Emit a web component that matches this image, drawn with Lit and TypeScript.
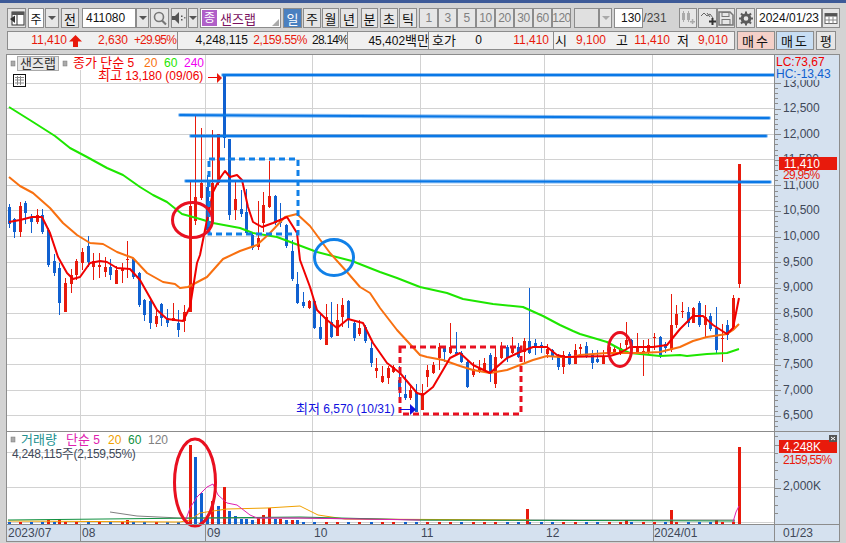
import { LitElement, html, css, svg } from "lit";
import { customElement } from "lit/decorators.js";

// page coordinates are used throughout the chart: the svg viewBox starts at the panel corner
type Candle = [number, number, number, number, number, "r" | "b"];

const CANDLES: Candle[] = [
    [9, 204, 207, 224, 228, "b"], [14, 218, 219, 232, 238, "b"], [20, 202, 206, 232, 237, "r"],
    [25, 201, 203, 213, 224, "b"], [31, 214, 217, 222, 233, "b"], [37, 209, 215, 222, 224, "r"],
    [42, 209, 215, 232, 234, "b"], [48, 228, 230, 265, 267, "b"], [54, 254, 261, 273, 276, "b"],
    [59, 263, 268, 303, 315, "b"], [65, 278, 283, 312, 312, "r"], [71, 269, 275, 284, 293, "r"],
    [76, 259, 261, 275, 280, "r"], [82, 248, 252, 263, 270, "r"], [88, 236, 246, 262, 267, "b"],
    [93, 253, 261, 267, 280, "r"], [99, 253, 265, 267, 278, "r"], [105, 257, 267, 272, 277, "r"],
    [110, 259, 267, 275, 280, "b"], [116, 266, 270, 284, 284, "r"], [122, 263, 268, 271, 283, "r"],
    [127, 241, 259, 260, 278, "r"], [133, 258, 259, 277, 279, "b"], [139, 272, 273, 305, 307, "b"],
    [144, 299, 300, 315, 321, "b"], [150, 300, 301, 323, 329, "b"], [156, 309, 316, 324, 327, "r"],
    [161, 303, 304, 318, 326, "b"], [167, 309, 318, 323, 327, "b"], [173, 303, 318, 321, 321, "r"],
    [178, 310, 323, 330, 337, "b"], [184, 305, 312, 321, 332, "r"], [190, 182, 206, 312, 312, "r"],
    [195, 116, 197, 221, 225, "r"], [201, 128, 183, 198, 200, "r"], [207, 175, 187, 230, 232, "b"],
    [212, 130, 183, 222, 224, "r"], [218, 134, 134, 183, 185, "r"], [224, 75, 75, 138, 148, "b"],
    [229, 139, 139, 215, 220, "b"], [235, 182, 199, 210, 220, "r"], [241, 190, 209, 214, 217, "b"],
    [246, 189, 212, 233, 235, "b"], [252, 233, 235, 248, 250, "b"], [258, 201, 238, 247, 250, "r"],
    [263, 192, 205, 223, 232, "r"], [269, 161, 196, 207, 208, "r"], [275, 195, 196, 223, 225, "b"],
    [280, 203, 219, 223, 227, "b"], [286, 224, 225, 246, 248, "b"], [292, 240, 251, 279, 281, "b"],
    [297, 272, 284, 303, 304, "b"], [303, 292, 302, 306, 308, "b"], [309, 300, 301, 308, 309, "r"],
    [314, 300, 301, 328, 329, "b"], [320, 313, 327, 339, 340, "b"], [326, 304, 317, 345, 345, "r"],
    [331, 302, 322, 337, 338, "b"], [337, 304, 320, 336, 336, "r"], [342, 298, 305, 317, 327, "r"],
    [348, 300, 301, 320, 328, "b"], [354, 320, 323, 338, 341, "b"], [359, 320, 328, 334, 336, "r"],
    [365, 325, 327, 341, 343, "b"], [371, 342, 348, 363, 367, "b"], [376, 358, 368, 371, 378, "r"],
    [382, 366, 376, 382, 383, "r"], [388, 366, 368, 378, 384, "r"], [393, 365, 367, 372, 373, "r"],
    [399, 366, 380, 390, 403, "b"], [405, 375, 394, 398, 400, "b"], [410, 385, 390, 398, 400, "r"],
    [416, 384, 392, 412, 412, "b"], [422, 384, 393, 410, 410, "r"], [427, 365, 370, 377, 387, "r"],
    [433, 362, 365, 373, 374, "r"], [439, 343, 347, 358, 370, "r"], [444, 346, 348, 352, 362, "b"],
    [450, 323, 347, 353, 354, "r"], [456, 332, 352, 354, 354, "b"], [461, 351, 353, 362, 363, "b"],
    [467, 361, 362, 387, 388, "b"], [473, 362, 369, 375, 377, "r"], [479, 360, 368, 372, 373, "r"],
    [484, 358, 363, 372, 373, "r"], [490, 353, 355, 372, 382, "b"], [495, 347, 357, 384, 388, "r"],
    [501, 342, 347, 358, 359, "r"], [507, 345, 347, 358, 362, "b"], [512, 337, 347, 353, 354, "r"],
    [518, 343, 347, 357, 358, "b"], [524, 338, 341, 352, 362, "r"], [529, 288, 341, 353, 354, "b"],
    [535, 339, 343, 347, 355, "b"], [541, 342, 345, 347, 353, "b"], [547, 344, 349, 354, 358, "r"],
    [552, 349, 350, 357, 360, "b"], [558, 354, 355, 367, 370, "b"], [563, 351, 355, 367, 374, "r"],
    [569, 352, 354, 364, 365, "b"], [575, 344, 350, 364, 364, "r"], [580, 344, 347, 349, 357, "r"],
    [586, 342, 346, 357, 358, "b"], [592, 350, 354, 363, 369, "b"], [597, 350, 359, 362, 363, "b"],
    [603, 350, 356, 364, 364, "r"], [609, 345, 347, 354, 356, "r"], [614, 345, 349, 353, 355, "r"],
    [620, 343, 348, 352, 355, "r"], [626, 322, 340, 345, 350, "r"], [631, 339, 340, 350, 352, "b"],
    [637, 333, 348, 352, 353, "r"], [643, 340, 351, 353, 376, "r"], [648, 339, 345, 353, 355, "r"],
    [654, 333, 337, 338, 350, "r"], [660, 336, 337, 355, 358, "b"], [665, 342, 344, 348, 353, "b"],
    [671, 294, 325, 350, 352, "r"], [676, 305, 314, 325, 328, "r"], [682, 302, 311, 312, 318, "r"],
    [688, 307, 312, 323, 327, "b"], [693, 307, 308, 323, 323, "r"], [699, 301, 303, 325, 327, "b"],
    [705, 305, 317, 325, 337, "r"], [710, 313, 316, 329, 331, "b"], [716, 307, 328, 350, 353, "b"],
    [722, 324, 338, 339, 362, "r"], [727, 320, 325, 335, 340, "b"], [733, 295, 298, 328, 330, "r"],
    [739, 164, 164, 284, 288, "r"],
];

const GREEN = "9,107 33,122 55,136 70,148 87,157 107,168 123,175 140,187 153,195 167,202 182,214 200,219 213,223 240,228 253,233 277,237 293,243 317,252 352,261 380,272 397,278 420,287 447,293 463,299 493,304 523,307 543,316 560,325 573,331 580,334 597,339 607,342 620,349 630,353 640,354 660,356 680,355 687,356 707,354 727,353 739,349";
const ORANGE = "9,177 20,186 33,193 50,208 63,223 77,235 90,243 103,244 117,252 133,258 147,273 163,282 175,284 180,288 188,287 207,277 223,259 240,251 257,245 270,233 285,217 297,214 310,226 330,253 347,272 360,287 370,293 380,308 397,330 420,355 427,357 443,360 460,366 473,370 490,373 507,370 520,365 533,360 547,356 560,357 573,357 580,355 607,353 640,353 660,352 680,347 693,341 707,337 727,334 733,330 739,324";
const RED = "9,222 20,220 32,217 42,217 50,233 58,257 67,273 73,279 80,277 90,263 100,261 107,262 117,268 130,269 140,280 157,310 167,319 183,321 190,307 197,263 200,255 207,220 213,192 220,178 225,171 230,177 237,175 242,180 248,207 253,222 262,227 273,223 287,217 297,233 300,260 310,287 317,310 327,320 337,328 348,319 363,323 373,343 387,363 400,373 417,393 423,395 433,387 443,370 450,358 460,353 473,365 490,373 507,358 520,352 533,347 547,347 557,355 565,357 610,356 620,353 630,347 653,347 667,345 680,329 693,316 703,316 713,325 727,334 733,328 739,298";

const VOL_MAGENTA = "185,522 190,508 197,497 207,487 213,484 218,495 227,503 237,505 250,515 257,518 300,518 420,520";
const VOL_ORANGE = "8,521 180,522 190,520 200,513 213,511 227,509 267,508 300,506 318,515 345,519 530,520";
const VOL_GREEN = "8,520 200,518 300,517 420,520 735,521";
const VOL_GRAY = "110,512 137,516 180,518 300,518 430,520 735,520";

// tall volume bars around the September spike, the rest stays near the baseline
const VOL_BARS: [number, number, "r" | "b"][] = [
    [190, 445, "r"], [195, 457, "b"], [201, 493, "b"], [207, 518, "b"], [212, 501, "r"], [218, 506, "b"],
    [224, 487, "r"], [229, 511, "b"], [235, 516, "b"], [241, 519, "b"], [246, 519, "b"], [252, 520, "b"],
    [258, 518, "r"], [263, 515, "r"], [269, 508, "r"], [275, 519, "b"], [280, 519, "r"], [286, 520, "b"],
    [292, 520, "r"], [297, 520, "b"], [48, 520, "r"], [59, 519, "r"], [127, 520, "r"], [527, 509, "r"],
    [671, 510, "r"], [739, 447, "r"], [626, 520, "r"], [716, 520, "r"],
];

const PRICE_LABELS = ["13,000", "12,500", "12,000", "11,500", "11,000", "10,500", "10,000", "9,500", "9,000", "8,500", "8,000", "7,500", "7,000", "6,500"];
const H_GRID = [83, 108, 134, 159, 185, 210, 236, 262, 287, 313, 338, 364, 390, 415];
const V_GRID = [80, 205, 312, 420, 544, 652];
const DATES: [number, string][] = [[8, "2023/07"], [82, "08"], [207, "09"], [314, "10"], [421, "11"], [546, "12"], [654, "2024/01"]];

const HANGUL = /([가-힣]+)/;

const range = (from: number, to: number, step: number) => {
    const out: number[] = [];
    for (let v = from; v <= to; v += step) out.push(v);
    return out;
};

// hangul in the CJK font runs narrower than the reference, so those runs get a size up
const svgRuns = (t: string) =>
    t.split(HANGUL).filter(Boolean).map((p) => (HANGUL.test(p) ? svg`<tspan class="h">${p}</tspan>` : p));
const htmlRuns = (t: string) =>
    t.split(HANGUL).filter(Boolean).map((p) => (HANGUL.test(p) ? html`<span class="h">${p}</span>` : html`<span>${p}</span>`));

const ic = {
    panel: svg`<rect x="4" y="2" width="12" height="13" fill="#fff" stroke="#333"/><rect x="4" y="2" width="12" height="3" fill="#555"/><line x1="9" y1="5" x2="9" y2="15" stroke="#333"/><path d="M7 5.500 2 9l5 4z" fill="#333"/>`,
    search: svg`<circle cx="8" cy="7" r="4.500" fill="none" stroke="#777" stroke-width="1.600"/><line x1="11" y1="10.500" x2="15" y2="14.500" stroke="#777" stroke-width="2.200"/>`,
    speaker: svg`<path d="M2 6h3l4-4v12L5 10H2z" fill="#555"/><rect x="11" y="5.500" width="1.500" height="1.500" fill="#555"/><rect x="11" y="9" width="1.500" height="1.500" fill="#555"/><rect x="14" y="7" width="1.500" height="1.500" fill="#777"/>`,
    candles: svg`<g fill="#aaa"><rect x="3" y="3" width="3" height="7"/><rect x="8" y="3" width="3" height="7"/><rect x="4" y="1" width="1" height="11"/><rect x="9" y="1" width="1" height="11"/><rect x="11" y="11" width="5" height="1.500"/><rect x="12.800" y="9" width="1.500" height="5"/></g>`,
    addLine: svg`<polyline points="2,6 5,3 8,6 11,4 14,8" fill="none" stroke="#666"/><polyline points="8,3 11,7" fill="none" stroke="#666"/><rect x="10" y="10.500" width="7" height="2" fill="#333"/><rect x="12.500" y="8" width="2" height="7" fill="#333"/>`,
    save: svg`<path d="M2 2h11l3 3v10H2z" fill="none" stroke="#777" stroke-width="1.500"/><rect x="5" y="2.500" width="7" height="4" fill="none" stroke="#777"/><rect x="5" y="9.500" width="8" height="5" fill="none" stroke="#777"/>`,
    gear: svg`<circle cx="9" cy="8.500" r="3.800" fill="none" stroke="#5c5c5c" stroke-width="3"/><path d="M9 1.500v3M9 12.500v3M2 8.500h3M13 8.500h3M4 3.500l2 2M12 11.500l2 2M14 3.500l-2 2M6 11.500l-2 2" stroke="#5c5c5c" stroke-width="2"/>`,
    calendar: svg`<rect x="3" y="3.500" width="12" height="10" fill="#fff" stroke="#666"/><rect x="3" y="3.500" width="12" height="3" fill="#555"/><path d="M7 6.500v7M11 6.500v7M3 10h12" stroke="#888"/>`,
};

interface Tool {
    w: number;
    gap: number;
    kind?: string;
    t?: string;
    icon?: unknown;
}

const TOOLS: Tool[] = [
    { w: 19, gap: 0, icon: ic.panel },
    { w: 16, gap: 2, kind: "field center", t: "주" },
    { w: 14, gap: 1, kind: "arrow" },
    { w: 18, gap: 2, t: "전" },
    { w: 54, gap: 3, kind: "field", t: "411080" },
    { w: 13, gap: 0, kind: "arrow" },
    { w: 19, gap: 1, icon: ic.search },
    { w: 16, gap: 2, icon: ic.speaker },
    { w: 10, gap: 1, kind: "arrow" },
    { w: 81, gap: 2, kind: "stock" },
    { w: 19, gap: 2, kind: "on", t: "일" },
    { w: 18, gap: 1, t: "주" },
    { w: 17, gap: 1, t: "월" },
    { w: 18, gap: 1, t: "년" },
    { w: 17, gap: 3, t: "분" },
    { w: 18, gap: 2, t: "초" },
    { w: 18, gap: 1, t: "틱" },
    ...["1", "3", "5", "10", "20", "30", "60", "120"].map((t, i) => ({ w: 19, gap: i ? 0 : 2, kind: "off", t })),
    { w: 25, gap: 3, kind: "blank" },
    { w: 13, gap: 0, kind: "arrow dim" },
    { w: 29, gap: 2, kind: "field right", t: "130" },
    { w: 24, gap: 0, kind: "plain", t: "/231" },
    { w: 18, gap: 12, icon: ic.candles },
    { w: 19, gap: 1, icon: ic.addLine },
    { w: 18, gap: 0, icon: ic.save },
    { w: 19, gap: 1, icon: ic.gear },
    { w: 66, gap: 1, kind: "field center", t: "2024/01/23" },
    { w: 18, gap: 0, icon: ic.calendar },
];

// [text, right edge on the page, classes]
type Cell = [string, number, string];
const INFO: { from: number; to: number; cells: Cell[] }[] = [
    { from: 7, to: 178, cells: [["11,410", 67, "red"], ["", 82, "arrow-up"], ["2,630", 128, "red"], ["+29.95%", 176, "red pct"]] },
    { from: 178, to: 349, cells: [["4,248,115", 248, ""], ["2,159.55%", 307, "red pct2"], ["28.14%", 348, "pct"]] },
    { from: 349, to: 431, cells: [["45,402백만", 430, ""]] },
    { from: 431, to: 557, cells: [["호가", 458, ""], ["0", 484, ""], ["11,410", 551, "red"]] },
    { from: 557, to: 739, cells: [["시", 570, ""], ["9,100", 609, "red"], ["고", 631, ""], ["11,410", 673, "red"], ["저", 692, ""], ["9,010", 731, "red"]] },
];

@customElement("app-root")
export class AppRoot extends LitElement {
    private _tool(t: Tool) {
        const style = `width:${t.w}px;margin-left:${t.gap}px`;
        if (t.kind === "stock") {
            return html`<div class="stock" style=${style}><span class="tag">종</span><span class="name">샌즈랩</span><i class="corner"></i></div>`;
        }
        if (t.kind?.startsWith("arrow")) {
            return html`<div class="btn ${t.kind}" style=${style}><i class="caret"></i></div>`;
        }
        return html`<div class="btn ${t.kind ?? ""}" style=${style}>
            ${t.icon ? html`<svg class="glyph" viewBox="0 0 18 17">${t.icon}</svg>` : t.t}
        </div>`;
    }

    private _info(seg: { from: number; to: number; cells: Cell[] }) {
        let prev = seg.from;
        return html`<div class="seg" style="width:${seg.to - seg.from}px">
            ${seg.cells.map(([text, end, cls]) => {
                const w = end - prev;
                prev = end;
                return cls === "arrow-up"
                    ? html`<span class="cell" style="width:${w}px"><svg class="up" viewBox="0 0 13 12"><path d="M6.500 0 13 6.500H9V12H4V6.500H0z" fill="#e81a0c"/></svg></span>`
                    : html`<span class="cell ${cls}" style="width:${w}px">${htmlRuns(text)}</span>`;
            })}
        </div>`;
    }

    private _candle([x, hi, top, bot, lo, c]: Candle) {
        const cls = c === "r" ? "up-c" : "down-c";
        return svg`<rect class=${cls} x=${x} y=${hi} width="1" height=${lo - hi}/>
            <rect class=${cls} x=${x - 1} y=${top} width="3" height=${Math.max(bot - top, 1)}/>`;
    }

    private _chart() {
        return svg`
            <rect x="7" y="55" width="767" height="376" fill="#fff"/>
            <rect x="774" y="55" width="65" height="486" class="axis-bg"/>
            <rect x="7" y="525" width="832" height="16" class="axis-bg"/>
            <line class="frame" x1="6.500" x2="6.500" y1="54" y2="541"/>
            <line class="frame" x1="839.500" x2="839.500" y1="54" y2="541"/>
            <line class="frame" x1="6" x2="840" y1="54.500" y2="54.500"/>
            <line class="frame" x1="6" x2="840" y1="541.500" y2="541.500"/>

            <!-- grid -->
            ${H_GRID.map((y) => svg`<line class="grid" x1="7" x2="774" y1=${y + 0.5} y2=${y + 0.5}/>`)}
            ${V_GRID.map((x) => svg`<line class="grid" x1=${x + 0.5} x2=${x + 0.5} y1=${x === 80 ? 70 : 55} y2="431"/>`)}
            <rect x="7" y="432" width="767" height="92" fill="#fff"/>
            ${V_GRID.map((x) => svg`<line class="grid" x1=${x + 0.5} x2=${x + 0.5} y1="432" y2="524"/>`)}
            ${[452, 487, 522].map((y) => svg`<line class="grid" x1="7" x2="774" y1=${y + 0.5} y2=${y + 0.5}/>`)}

            <!-- price -->
            <g shape-rendering="crispEdges">${CANDLES.map((c) => this._candle(c))}</g>
            <polyline class="ma" points=${GREEN} stroke="#1ee600"/>
            <polyline class="ma" points=${ORANGE} stroke="#f87010"/>
            <polyline class="ma" points=${RED} stroke="#f00000"/>

            <!-- hand drawn marks -->
            ${[[223, 75, 775, 75], [180, 115, 769, 118], [191, 136, 766, 136], [186, 181, 770, 182]].map(
                ([a, b, c, d]) => svg`<line class="mark-halo" x1=${a} y1=${b} x2=${c} y2=${d}/>
                    <line class="mark" x1=${a} y1=${b} x2=${c} y2=${d}/>`,
            )}
            <rect class="dash blue" x="209" y="159" width="89" height="75"/>
            <rect class="dash redd" x="400" y="347" width="121" height="67"/>
            <ellipse class="ring redd" cx="192.500" cy="220" rx="20" ry="17.500"/>
            <ellipse class="ring blue" cx="334" cy="257.500" rx="19.500" ry="18"/>
            <ellipse class="ring redd" cx="620" cy="349.500" rx="11.500" ry="17"/>

            <!-- legend -->
            <rect class="sq" x="11" y="61" width="4" height="5"/>
            <rect x="17.500" y="56.500" width="41" height="14" class="name-box"/>
            <text x="20" y="68" class="t dark">${svgRuns("샌즈랩")}</text>
            <rect class="sq" x="63" y="61" width="4" height="5"/>
            <text x="73" y="67" class="t" fill="#f00000">${svgRuns("종가 단순 5")}</text>
            <text x="144" y="67" class="t" fill="#f87010">20</text>
            <text x="164" y="67" class="t" fill="#1ee600">60</text>
            <text x="184" y="67" class="t" fill="#f000f0">240</text>
            <text x="98" y="80" class="t" fill="#f00000">${svgRuns("최고 13,180 (09/06)")}</text>
            <line x1="208" y1="77.500" x2="218" y2="77.500" stroke="#f00000"/>
            <path d="M217 73l5 5-5 5z" fill="#e81a0c"/>
            <rect x="13.500" y="74.500" width="12" height="12" fill="#fff" stroke="#111"/>
            <path d="M15 77.500h9M15 80h9M15 83h9M17.500 76v9M20.500 76v9" stroke="#888" fill="none"/>
            <text x="296" y="413" class="t" fill="#1010e0">${svgRuns("최저 6,570 (10/31)")}</text>
            <line x1="400" y1="409.500" x2="411" y2="409.500" stroke="#1010e0"/>
            <path d="M410 404l6 5.500-6 5.500z" fill="#1010e0"/>

            <!-- price axis -->
            <line class="frame" x1="774.500" x2="774.500" y1="55" y2="541"/>
            ${range(83, 428, 5.12).map((y, i) => svg`<line class="tick" x1="775" x2=${i % 5 === 0 ? 781 : 778} y1=${Math.round(y) + 0.5} y2=${Math.round(y) + 0.5}/>`)}
            ${PRICE_LABELS.map((t, i) => svg`<text x="783" y=${H_GRID[i] + 4} class="t ax">${t}</text>`)}
            <rect x="775" y="55" width="64" height="25" class="axis-bg"/>
            <text x="776" y="66" class="t" fill="#f00000">LC:73,67</text>
            <text x="776" y="78" class="t" fill="#1060d0">HC:-13,43</text>
            <rect x="779" y="170" width="58" height="11" class="axis-bg"/>
            <rect x="779" y="157" width="58" height="13" fill="#e81a0c"/>
            <text x="784" y="168" class="t" fill="#fff">11,410</text>
            <text x="783" y="179" class="t tight" fill="#e81a0c">29,95%</text>

            <!-- volume -->
            <line class="frame" x1="7" x2="839" y1="431.500" y2="431.500"/>
            <g shape-rendering="crispEdges">
                ${CANDLES.filter(([x]) => x < 186 || x > 300).map(
                    ([x, , , , , c], i) => (i % 2 === 0
                        ? svg`<rect class=${c === "r" ? "up-c" : "down-c"} x=${x - 1} y="522" width="3" height="2"/>`
                        : svg``),
                )}
                ${VOL_BARS.map(([x, top, c]) => svg`<rect class=${c === "r" ? "up-c" : "down-c"} x=${x - 1} y=${top} width="3" height=${524 - top}/>`)}
            </g>
            <polyline class="thin" points=${VOL_GRAY} stroke="#808080"/>
            <polyline class="thin" points=${VOL_ORANGE} stroke="#f0a000"/>
            <polyline class="thin" points=${VOL_GREEN} stroke="#109040"/>
            <polyline class="thin" points=${VOL_MAGENTA} stroke="#e020b0"/>
            <polyline class="thin" points="733,522 736,512 739,506" stroke="#e020b0"/>
            <ellipse class="ring redd" cx="195" cy="482.500" rx="20.500" ry="43.500"/>
            <rect class="sq" x="11" y="437" width="4" height="5"/>
            <text x="21" y="444" class="t" fill="#209090">${svgRuns("거래량")}</text>
            <text x="66" y="444" class="t" fill="#e020b0">${svgRuns("단순 5")}</text>
            <text x="108" y="444" class="t" fill="#f0a000">20</text>
            <text x="128" y="444" class="t" fill="#109040">60</text>
            <text x="148" y="444" class="t" fill="#808080">120</text>
            <text x="12" y="458" class="t ax small-gap">${svgRuns("4,248,115주(2,159,55%)")}</text>

            ${range(436, 522, 8.6).map((y, i) => svg`<line class="tick" x1="775" x2=${i % 5 === 1 ? 781 : 778} y1=${Math.round(y) + 0.5} y2=${Math.round(y) + 0.5}/>`)}
            <rect x="779" y="440" width="58" height="13" fill="#e81a0c"/>
            <text x="783" y="451" class="t" fill="#fff">4,248K</text>
            <text x="783" y="464" class="t tight" fill="#e81a0c">2159,55%</text>
            <text x="783" y="490" class="t ax">2,000K</text>
            <rect x="829" y="435" width="8" height="7" fill="#555"/>
            <path d="M831 437l4 3M835 437l-4 3" stroke="#fff"/>

            <!-- date axis -->
            <line class="frame" x1="7" x2="839" y1="524.500" y2="524.500"/>
            ${[80, 205, 653, 774].map((x) => svg`<line class="frame" x1=${x + 0.5} x2=${x + 0.5} y1="525" y2="541"/>`)}
            ${DATES.map(([x, t]) => svg`<text x=${x} y="537" class="t ax">${t}</text>`)}
            <text x="783" y="537" class="t ax">01/23</text>
        `;
    }

    render() {
        return html`
            <div class="title"></div>
            <div class="toolbar">${TOOLS.map((t) => this._tool(t))}</div>
            <div class="infobar">
                ${INFO.map((s) => this._info(s))}
                <div class="btn trade buy">매수</div>
                <div class="btn trade sell">매도</div>
                <div class="btn trade flat">평</div>
            </div>
            <div class="chart">
                <svg viewBox="6 54 834 488" width="834" height="488">${this._chart()}</svg>
            </div>
        `;
    }

    static styles = css`
        :host {
            display: block;
            width: 846px;
            height: 543px;
            overflow: hidden;
            background: #d3d3d3;
            font: 12px "Liberation Sans", "Noto Sans CJK KR", sans-serif;
            color: #111;
        }
        .title {
            height: 3px;
            background: #3d5a98;
        }
        .toolbar {
            display: flex;
            height: 20px;
            margin-top: 5px;
            padding-left: 7px;
        }
        .btn {
            box-sizing: border-box;
            display: flex;
            flex: none;
            align-items: center;
            justify-content: center;
            height: 20px;
            border: 1px solid #8c8c8c;
            background: #e6e6e6;
            font-size: 13px;
            overflow: hidden;
            white-space: nowrap;
        }
        .glyph {
            width: 18px;
            height: 17px;
            flex: none;
        }
        .field {
            background: #fff;
            justify-content: flex-start;
            padding-left: 3px;
            font-size: 12px;
        }
        .field.center {
            justify-content: center;
            padding: 0;
        }
        .field.right {
            justify-content: flex-end;
            padding: 0 1px 0 0;
        }
        .on {
            background: #4a80c0;
            color: #fff;
        }
        .off {
            color: #808080;
            font-size: 12px;
            letter-spacing: -0.5px;
        }
        .blank {
            background: #e0e0e0;
        }
        .dim .caret {
            border-top-color: #aaa;
        }
        .plain {
            background: none;
            border: 0;
            font-size: 12px;
            color: #444;
        }
        .caret {
            width: 0;
            height: 0;
            border: 4px solid transparent;
            border-top: 4px solid #555;
            border-bottom: 0;
        }
        .stock {
            box-sizing: border-box;
            position: relative;
            display: flex;
            flex: none;
            align-items: center;
            height: 20px;
            border: 1px solid #8c8c8c;
            background: #fff;
        }
        .tag {
            width: 15px;
            height: 16px;
            margin-left: 1px;
            background: #b060c8;
            color: #fff;
            font-size: 12px;
            line-height: 16px;
            text-align: center;
        }
        .name {
            margin-left: 3px;
            color: #7a1060;
            font-size: 13px;
        }
        .corner {
            position: absolute;
            right: 1px;
            bottom: 1px;
            border-left: 7px solid transparent;
            border-bottom: 7px solid #aaa;
        }
        .infobar {
            display: flex;
            height: 19px;
            margin-top: 3px;
            padding-left: 7px;
        }
        .seg {
            box-sizing: border-box;
            display: flex;
            flex: none;
            height: 19px;
            align-items: center;
            border: 1px solid #8c8c8c;
            margin-right: -1px;
            background: #f0f0f0;
            white-space: nowrap;
        }
        .seg:first-child .cell:first-child {
            margin-left: -1px;
        }
        .cell {
            flex: none;
            display: flex;
            align-items: baseline;
            justify-content: flex-end;
            line-height: 15px;
            white-space: nowrap;
        }
        .h {
            font-size: 13px;
        }
        .red {
            color: #e81a0c;
        }
        .pct {
            letter-spacing: -0.8px;
        }
        .pct2 {
            letter-spacing: -0.4px;
        }
        .up {
            width: 13px;
            height: 12px;
        }
        .trade {
            height: 19px;
            font-size: 13px;
            letter-spacing: 2px;
        }
        .buy {
            width: 38px;
            margin-left: 3px;
            background: #f4d0c8;
        }
        .sell {
            width: 38px;
            margin-left: 1px;
            background: #c8def4;
        }
        .flat {
            width: 20px;
            margin-left: 2px;
            letter-spacing: 0;
        }
        .chart {
            margin: 4px 0 0 6px;
            height: 488px;
        }
        .chart svg {
            display: block;
        }
        .axis-bg {
            fill: #d5e1ef;
        }
        .grid {
            stroke: #d2d2d2;
        }
        .frame {
            stroke: #8c8c8c;
        }
        .tick {
            stroke: #8c8c8c;
        }
        .up-c {
            fill: #e81a0c;
        }
        .down-c {
            fill: #1060d0;
        }
        .ma {
            fill: none;
            stroke-width: 2;
            stroke-linejoin: round;
        }
        .thin {
            fill: none;
            stroke-width: 1;
        }
        .mark {
            stroke: #0a78e6;
            stroke-width: 2;
            stroke-linecap: round;
        }
        .mark-halo {
            stroke: #0a78e6;
            stroke-opacity: 0.45;
            stroke-width: 4;
            stroke-linecap: round;
        }
        .dash {
            fill: none;
            stroke-width: 3;
            stroke-dasharray: 6 4;
        }
        .ring {
            fill: none;
            stroke-width: 3;
        }
        .blue {
            stroke: #1080e8;
        }
        .redd {
            stroke: #e81020;
        }
        .sq {
            fill: #aaa;
            stroke: #777;
            stroke-width: 0.5;
        }
        .name-box {
            fill: #e6e6e6;
            stroke: #aaa;
        }
        .t {
            font: 12px "Liberation Sans", "Noto Sans CJK KR", sans-serif;
        }
        .tight {
            letter-spacing: -0.7px;
        }
        .small-gap {
            letter-spacing: -0.3px;
        }
        .dark {
            fill: #333;
        }
        .ax {
            fill: #404858;
        }
    `;
}
